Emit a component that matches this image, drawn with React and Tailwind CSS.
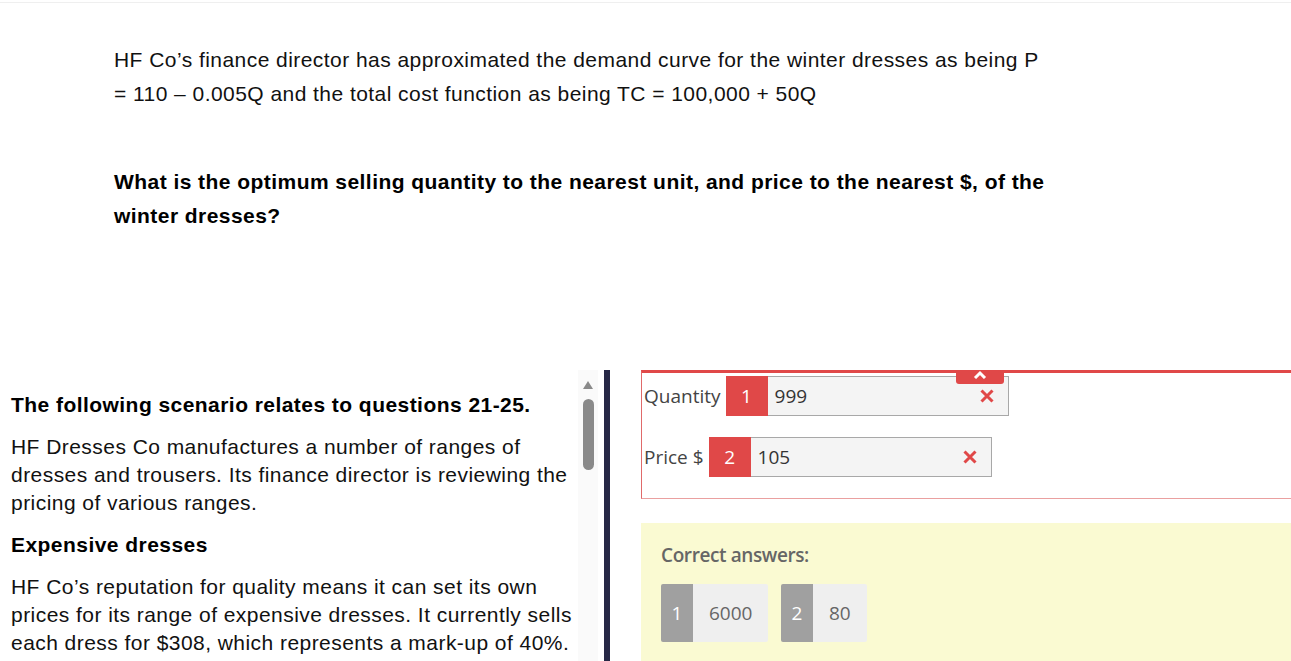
import React from "react";

const arial = { fontFamily: '"Liberation Sans", Arial, sans-serif' };
const open = { fontFamily: '"Open Sans", sans-serif' };

function XIcon() {
  return (
    <svg width="16" height="16" viewBox="0 0 16 16" className="shrink-0">
      <path d="M2.5 2.5 L13.5 13.5 M13.5 2.5 L2.5 13.5" stroke="#e04848" strokeWidth="3" strokeLinecap="butt" />
    </svg>
  );
}

function Field({ label, num, value, width }) {
  return (
    <div className="flex items-center">
      <span className="text-[19px] text-[#444] leading-[24px] pl-[2px] pr-[5px]">{label}</span>
      <div className={`flex items-stretch h-[40px] bg-[#f4f4f4] border border-[#a8a8a8] ${width}`}>
        <div className="w-[42px] -ml-px -mt-px h-[40px] bg-[#e04848] text-white text-[19px] flex items-center justify-center">{num}</div>
        <div className="flex-1 flex items-center pl-[7px] text-[19px] text-[#333]">{value}</div>
        <div className="flex items-center pr-[13px]"><XIcon /></div>
      </div>
    </div>
  );
}

function Chip({ num, value, w }) {
  return (
    <div className={`flex h-[58px] rounded-[2px] overflow-hidden ${w}`}>
      <div className="w-[32px] bg-[#a0a0a0] text-white text-[19px] flex items-center justify-center">{num}</div>
      <div className="flex-1 bg-[#efefef] text-[#666] text-[19px] flex items-center pl-[16px]">{value}</div>
    </div>
  );
}

export default function App() {
  return (
    <div className="w-[1291px] h-[661px] overflow-hidden bg-white relative">
      <div className="mt-[2px] border-t border-[#efefef]" />
      <div className="pl-[114px] pt-[40px] text-[21px] tracking-[0.45px] text-[#111]" style={arial}>
        <p className="leading-[34px] w-[1000px]">
          HF Co’s finance director has approximated the demand curve for the winter dresses as being P<br />
          = 110 – 0.005Q and the total cost function as being TC = 100,000 + 50Q
        </p>
        <p className="mt-[54px] leading-[34px] font-bold text-[#000]">
          What is the optimum selling quantity to the nearest unit, and price to the nearest $, of the<br />
          winter dresses?
        </p>
      </div>

      <div className="absolute left-0 top-[370px] w-[1291px] h-[291px] flex">
        <div className="flex w-[641px] h-full">
          <div className="w-[578px] h-full overflow-hidden pl-[11px] pt-[21px] text-[21px] tracking-[0.45px] text-[#111] leading-[28px] whitespace-nowrap" style={arial}>
            <p className="font-bold text-black mb-[14px]">The following scenario relates to questions 21-25.</p>
            <p className="mb-[14px]">HF Dresses Co manufactures a number of ranges of<br />dresses and trousers. Its finance director is reviewing the<br />pricing of various ranges.</p>
            <p className="font-bold text-black mb-[14px]">Expensive dresses</p>
            <p>HF Co’s reputation for quality means it can set its own<br />prices for its range of expensive dresses. It currently sells<br />each dress for $308, which represents a mark-up of 40%.</p>
          </div>
          <div className="w-[20px] h-full bg-[#fafafa] flex flex-col items-center pt-[11px]">
            <svg width="10" height="8" viewBox="0 0 10 8"><path d="M5 0 L10 8 L0 8 Z" fill="#8a8a8a" /></svg>
            <div className="mt-[10px] w-[11px] h-[71px] rounded-full bg-[#8a8a8a]" />
          </div>
          <div className="w-[6px] ml-[6px] h-full bg-[#272846]" />
        </div>

        <div className="flex-1 h-full" style={open}>
          <div className="relative border-t-[3px] border-l border-b border-t-[#e04848] border-l-[#e06a6a] border-b-[#eaa0a0] pt-[3px] pb-[21px] flex flex-col gap-[21px]">
            <div className="absolute left-[314px] -top-[3px] w-[48px] h-[14px] bg-[#e04848] rounded-b-[3px] flex justify-center">
              <svg width="14" height="9" viewBox="0 0 14 9"><path d="M2 8 L7 3 L12 8" stroke="white" strokeWidth="3" fill="none" /></svg>
            </div>
            <Field label="Quantity" num="1" value="999" width="w-[283px]" />
            <Field label="Price $" num="2" value="105" width="w-[283px]" />
          </div>
          <div className="mt-[24px] bg-[#fafad2] h-[200px] pl-[20px] pt-[20px]">
            <div className="text-[19px] leading-[24px] font-semibold text-[#666] tracking-[-0.4px]">Correct answers:</div>
            <div className="mt-[17px] flex gap-[13px]">
              <Chip num="1" value="6000" w="w-[107px]" />
              <Chip num="2" value="80" w="w-[86px]" />
            </div>
          </div>
        </div>
      </div>
    </div>
  );
}
